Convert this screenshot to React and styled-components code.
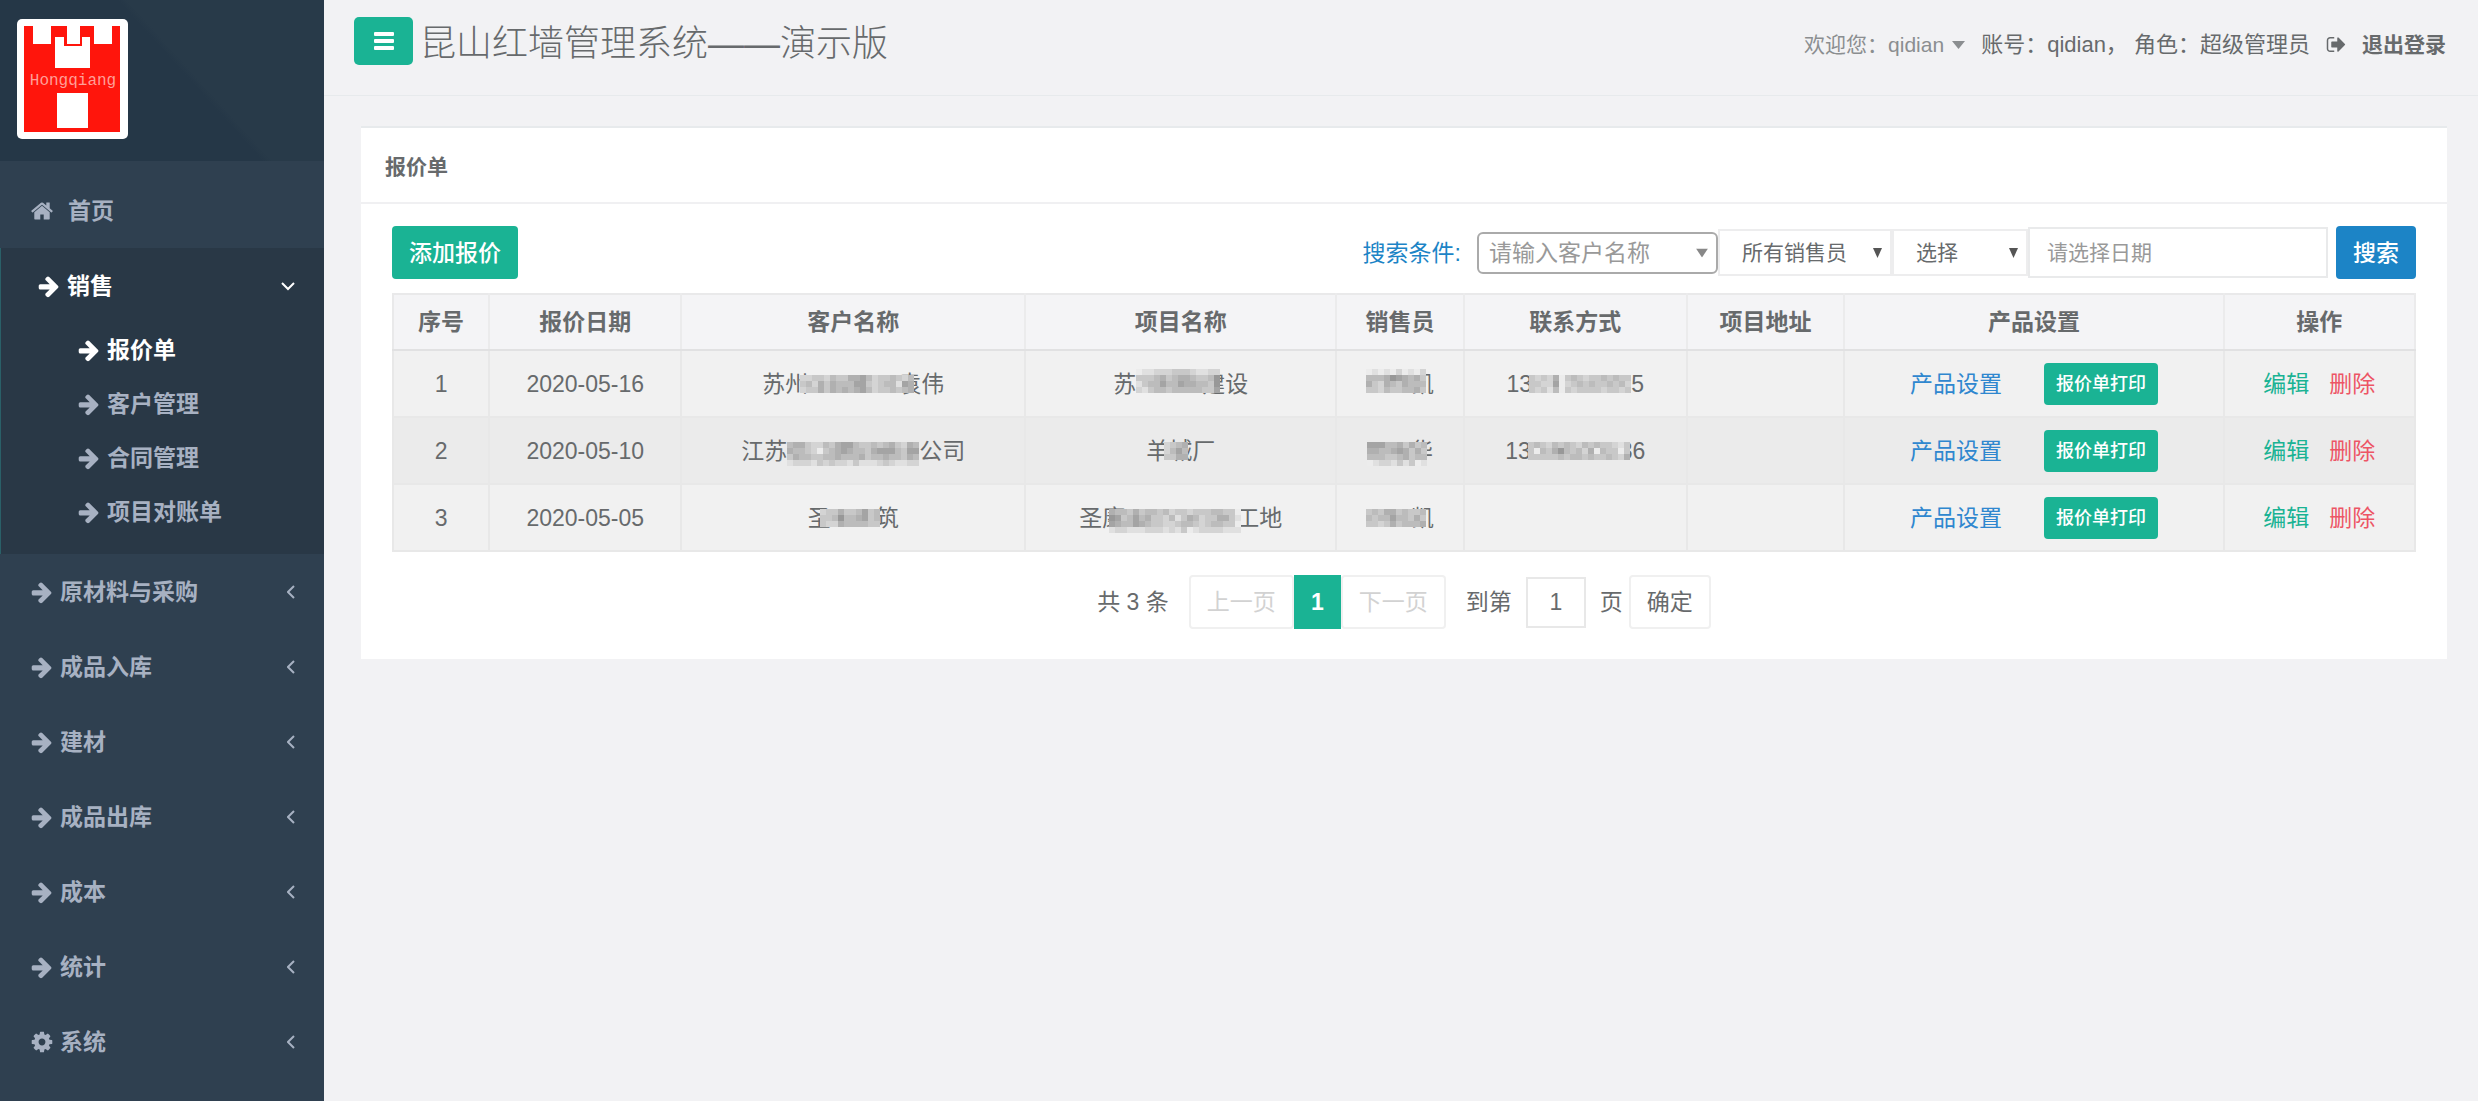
import React, { useState } from "react";
import styled, { createGlobalStyle, css } from "styled-components";

const GlobalStyle = createGlobalStyle`
  * {
    box-sizing: border-box;
  }

  body {
    margin: 0;
    background: #f2f2f4;
    color: #676a6c;
    font-family: "Liberation Sans", "Noto Sans CJK SC", sans-serif;
    font-size: 23px;
    line-height: 32px;
  }

  button,
  input,
  select {
    font-family: inherit;
    color: inherit;
    margin: 0;
  }

  a {
    text-decoration: none;
    color: inherit;
  }
`;

const Layout = styled.div`
  display: flex;
  min-height: 100vh;
`;

/* sidebar */

const Sidebar = styled.nav`
  flex: 0 0 324px;
  background: #2f4050;
  color: #a7b1c2;
  font-weight: 600;
`;

const Brand = styled.div`
  height: 161px;
  padding: 19px 17px;
  background: linear-gradient(
    48deg,
    #253747 0%,
    #253747 56%,
    #283a49 58%,
    #283a49 100%
  );
`;

const Menu = styled.ul`
  list-style: none;
  margin: 0;
  padding: 12px 0 0;
`;

const MenuGroup = styled.li`
  ${(props) =>
    props.$active &&
    css`
      background: #293846;
      color: #fff;
      border-left: 1px solid #2a6068;
      padding: 0 0 15px 6px;
    `}
`;

const MenuLink = styled.a`
  display: flex;
  align-items: center;
  height: 75px;
  padding: 0 29px 0 30px;
  gap: ${(props) => (props.$wide ? 14 : 6)}px;
`;

const MenuText = styled.span`
  flex: 1;
`;

const SubMenu = styled.ul`
  list-style: none;
  margin: 0;
  padding: 0;
`;

const SubLink = styled.a`
  display: flex;
  align-items: center;
  gap: 6px;
  height: 54px;
  padding-left: 70px;
  color: ${(props) => (props.$active ? "#fff" : "#a7b1c2")};
`;

const Icon = styled.svg`
  display: block;
  flex: none;
  fill: currentColor;
`;

const Chevron = styled.svg`
  flex: none;
  fill: none;
  stroke: currentColor;
  stroke-width: 2;
`;

/* header */

const Main = styled.main`
  flex: 1;
  min-width: 0;
`;

const TopBar = styled.header`
  display: flex;
  align-items: center;
  height: 96px;
  padding: 0 32px 14px 30px;
  border-bottom: 1px solid #e7eaec;
`;

const ToggleButton = styled.button`
  display: flex;
  align-items: center;
  justify-content: center;
  width: 59px;
  height: 48px;
  border: none;
  border-radius: 5px;
  background: #1ab394;
  color: #fff;
`;

const Title = styled.h1`
  flex: 1;
  margin: 0 0 0 7px;
  padding-top: 6px;
  font-size: 36px;
  font-weight: 300;
  line-height: 48px;
`;

const UserBar = styled.div`
  display: flex;
  align-items: center;
  padding-top: 8px;
  gap: 16px;
`;

const Account = styled.span`
  font-size: 22px;
`;

const Welcome = styled.a`
  display: flex;
  align-items: center;
  gap: 8px;
  font-size: 21px;
  color: #8b8e90;
`;

const Logout = styled.a`
  display: flex;
  align-items: center;
  gap: 15px;
  font-size: 21px;
  font-weight: 600;
`;

/* panel */

const Panel = styled.section`
  margin: 30px 31px 0 37px;
  background: #fff;
  border-top: 2px solid #e7eaec;
`;

const PanelTitle = styled.h2`
  margin: 0;
  padding: 23px 24px 19px;
  border-bottom: 2px solid #f0f0f2;
  font-size: 21px;
  font-weight: 600;
  line-height: 32px;
`;

const PanelBody = styled.div`
  padding: 22px 31px 30px;
`;

const Toolbar = styled.div`
  display: flex;
  justify-content: space-between;
  align-items: center;
  margin-bottom: 14px;
`;

const Button = styled.button`
  height: 53px;
  padding: 0 17px;
  border: none;
  border-radius: 4px;
  background: ${(props) => props.$color || "#1ab394"};
  color: #fff;
  font-size: 23px;
  font-weight: 500;
  line-height: 32px;
`;

const SearchForm = styled.form`
  display: flex;
  align-items: center;
`;

const SearchLabel = styled.label`
  color: #1c84c6;
  margin-right: 16px;
`;

const SelectBox = styled.span`
  position: relative;
  display: block;
  width: ${(props) => props.$width}px;
`;

const Select = styled.select`
  appearance: none;
  display: block;
  width: 100%;
  height: 47px;
  padding: 0 22px;
  border: 2px solid #ededee;
  border-radius: 0;
  background: #fff;
  font-size: 21px;
`;

const CustomerSelect = styled(Select)`
  height: 42px;
  padding: 0 10px;
  border: 2px solid #aaa;
  border-radius: 6px;
  font-size: 23px;
  color: #999;
`;

const Arrow = styled.svg`
  position: absolute;
  right: 10px;
  top: 50%;
  transform: translateY(-50%);
  fill: ${(props) => props.$color};
  pointer-events: none;
`;

const DateInput = styled.input`
  width: 300px;
  height: 51px;
  margin-right: 8px;
  padding: 0 17px;
  border: 2px solid #e9eaeb;
  background: #fff;
  font-size: 21px;

  &::placeholder {
    color: #999;
    opacity: 1;
  }
`;

/* table */

const Table = styled.table`
  width: 100%;
  table-layout: fixed;
  border-collapse: collapse;
  text-align: center;
  border: 2px solid #e9e9ea;
`;

const Th = styled.th`
  width: ${(props) => props.$width}px;
  height: 56px;
  padding: 0;
  background: #f4f4f6;
  border-right: 2px solid #ebebec;
  border-bottom: 2px solid #e1e1e2;
  font-weight: 600;
`;

const Row = styled.tr`
  background: #f1f1f1;

  &:nth-child(even) {
    background: #ebebeb;
  }
`;

const Td = styled.td`
  height: 67px;
  padding: 0;
  border: 2px solid #e8e8e8;
`;

const Actions = styled.div`
  display: flex;
  justify-content: center;
  align-items: center;
  gap: ${(props) => props.$gap}px;
`;

const ActionLink = styled.a`
  color: ${(props) => props.$color};
`;

const PrintButton = styled(Button)`
  height: 42px;
  padding: 0 12px;
  font-size: 18px;
`;

const MaskedText = styled.span`
  display: inline-flex;
  align-items: center;
  white-space: nowrap;
  vertical-align: middle;
`;

const MosaicSvg = styled.svg`
  position: relative;
  flex: none;
  overflow: visible;
  margin: 0 -${(props) => props.$right}px 0 -${(props) => props.$left}px;
`;

/* pagination */

const Pagination = styled.div`
  display: flex;
  justify-content: center;
  align-items: center;
  margin-top: 23px;
`;

const PageGroup = styled.div`
  display: flex;
  margin: 0 20px;
`;

const PageButton = styled.button`
  height: 54px;
  padding: 0 16px;
  border: 2px solid #f0f0f0;
  border-radius: 4px;
  background: #fff;
  font-size: 23px;
  line-height: 32px;

  &:disabled {
    color: #d2d2d2;
  }
`;

const CurrentPage = styled(PageButton)`
  width: 47px;
  padding: 0;
  border: none;
  border-radius: 0;
  background: #1ab394;
  color: #fff;
  font-weight: 600;
`;

const PageInput = styled.input`
  width: 60px;
  height: 51px;
  margin: 0 14px;
  padding: 0;
  border: 2px solid #e8e8e8;
  background: #fff;
  font-size: 23px;
  text-align: center;
`;

const PageUnit = styled.span`
  margin-right: 6px;
`;

const ICON_PATHS = {
  arrow:
    "M1600 960q0 54-37 91l-651 651q-39 37-91 37-51 0-90-37l-75-75q-38-38-38-91t38-91l293-293h-704q-52 0-84.5-37.5t-32.5-90.5v-128q0-53 32.5-90.5t84.5-37.5h704l-293-294q-38-36-38-90t38-90l75-75q38-38 90-38 53 0 91 38l651 651q37 35 37 90z",
  home: "M1472 992v480q0 26-19 45t-45 19h-384v-384h-256v384h-384q-26 0-45-19t-19-45v-480q0-1 .5-3t.5-3l575-474 575 474q1 2 1 6zm223-69l-62 74q-8 9-21 11h-3q-13 0-21-7l-692-577-692 577q-12 8-24 7-13-2-21-11l-62-74q-8-10-7-23.5t11-21.5l719-599q32-26 76-26t76 26l244 204v-195q0-14 9-23t23-9h192q14 0 23 9t9 23v408l219 182q10 8 11 21.5t-7 23.5z",
  cog: "M1152 896q0-106-75-181t-181-75-181 75-75 181 75 181 181 75 181-75 75-181zm512-109v222q0 12-8 23t-20 13l-185 28q-19 54-39 91 35 50 107 138 10 12 10 25t-9 23q-27 37-99 108t-94 71q-12 0-26-9l-138-108q-44 23-91 38-16 136-29 186-7 28-36 28h-222q-14 0-24.5-8.5t-11.5-21.5l-28-184q-49-16-90-37l-141 107q-10 9-25 9-14 0-25-11-126-114-165-168-7-10-7-23 0-12 8-23 15-21 51-66.5t54-70.5q-27-50-41-99l-183-27q-13-2-21-12.5t-8-23.5v-222q0-12 8-23t19-13l186-28q14-46 39-92-40-57-107-138-10-12-10-24 0-10 9-23 26-36 98.5-107.5t94.5-71.5q13 0 26 10l138 107q44-23 91-38 16-136 29-186 7-28 36-28h222q14 0 24.5 8.5t11.5 21.5l28 184q49 16 90 37l142-107q9-9 24-9 13 0 25 10 129 119 165 170 7 8 7 22 0 12-8 23-15 21-51 66.5t-54 70.5q26 50 41 98l183 28q13 2 21 12.5t8 23.5z",
  signOut:
    "M704 1440q0 4 1 20t.5 26.5-3 23.5-10 19.5-20.5 6.5h-320q-119 0-203.5-84.5t-84.5-203.5v-704q0-119 84.5-203.5t203.5-84.5h320q13 0 22.5 9.5t9.5 22.5q0 4 1 20t.5 26.5-3 23.5-10 19.5-20.5 6.5h-320q-66 0-113 47t-47 113v704q0 66 47 113t113 47h312l11.5 1 11.5 3 8 5.5 7 9 2 13.5zm928-544q0 26-19 45l-544 544q-19 19-45 19t-45-19-19-45v-288h-448q-26 0-45-19t-19-45v-384q0-26 19-45t45-19h448v-288q0-26 19-45t45-19 45 19l544 544q19 19 19 45z",
};

const Glyph = ({ name, size = 24 }) => (
  <Icon width={size} height={size} viewBox="0 0 1792 1792" aria-hidden="true">
    <path d={ICON_PATHS[name]} />
  </Icon>
);

const Logo = () => (
  <svg width="111" height="120" viewBox="0 0 111 120" role="img">
    <rect width="111" height="120" rx="5" fill="#fff" />
    <path
      d="M7 7h9v18h18V7h16v18h13V7h14v18h18V7h8v106H7z"
      fill="#ff150c"
    />
    <path d="M38 18h9v9h18v-9h8v31H38z" fill="#fff" />
    <rect x="40" y="74" width="31" height="35" fill="#fff" />
    <text
      x="56"
      y="66"
      textAnchor="middle"
      fontFamily="'Liberation Mono', monospace"
      fontSize="16"
      fontWeight="400"
      fill="#ff9f98"
    >
      Hongqiang
    </text>
  </svg>
);

const menu = [
  "原材料与采购",
  "成品入库",
  "建材",
  "成品出库",
  "成本",
  "统计",
  "系统",
];

const subMenu = ["报价单", "客户管理", "合同管理", "项目对账单"];

const columns = [
  ["序号", 96],
  ["报价日期", 192],
  ["客户名称", 343],
  ["项目名称", 311],
  ["销售员", 127],
  ["联系方式", 223],
  ["项目地址", 157],
  ["产品设置", 379],
  ["操作", 191],
];

// each mask row is a line of grey levels, 0 is the lightest
const rows = [
  {
    date: "2020-05-16",
    customer: {
      before: "苏州",
      after: "袁伟",
      left: 8,
      right: 16,
      mask: ["2233243355642334324", "3425354446632344165", "2335354545642334345"],
    },
    project: {
      before: "苏",
      after: "建设",
      left: 0,
      right: 18,
      lift: 1,
      mask: ["01122233321122", "33345345543347", "13446446554437", "21344344444336"],
    },
    seller: {
      before: "",
      after: "凯",
      left: 0,
      right: 15,
      lift: 1,
      mask: ["0101020102", "4445765453", "5325435444", "3324334453"],
    },
    phone: {
      before: "13",
      after: "5",
      left: 3,
      right: 0,
      mask: ["32325034323343433", "33226023434334342", "32314032333323323"],
    },
  },
  {
    date: "2020-05-10",
    customer: {
      before: "江苏",
      after: "公司",
      left: 0,
      right: 0,
      mask: [
        "4553224356643343453254",
        "5443203456544356664366",
        "3544334454445344544354",
        "1222132322131112321122",
      ],
    },
    project: {
      before: "羊",
      after: "城厂",
      left: 5,
      right: 19,
      mask: ["2345", "2464", "3355"],
    },
    seller: {
      before: "",
      after: "华",
      left: 0,
      right: 17,
      mask: ["6664453534", "5544565353", "4443345344", "0122131301"],
    },
    phone: {
      before: "13",
      after: "36",
      left: 3,
      right: 10,
      mask: ["34324343243433213", "30435743425043303", "33333434434334325"],
    },
  },
  {
    date: "2020-05-05",
    customer: {
      before: "圣",
      after: "筑",
      left: 11,
      right: 4,
      mask: ["2335334634", "3347445634", "3225444433"],
    },
    project: {
      before: "圣康",
      after: "工地",
      left: 16,
      right: 5,
      mask: [
        "5443534434233233344330",
        "7634645332413542335531",
        "6544654332234432344330",
        "1221112221213012222111",
      ],
    },
    seller: {
      before: "",
      after: "凯",
      left: 0,
      right: 15,
      mask: ["3435534334", "4344644353", "3323534445"],
    },
    phone: null,
  },
];

const CELL = 6;

const shade = (level) => {
  const grey = 236 - Number(level) * 12;
  return `rgb(${grey}, ${grey}, ${grey})`;
};

const Masked = ({ value }) => {
  if (!value) return null;
  const { before, after, left, right, mask, lift = 0 } = value;
  return (
    <MaskedText>
      {before}
      <MosaicSvg
        width={mask[0].length * CELL}
        height={CELL * 3}
        $left={left}
        $right={right}
        shapeRendering="crispEdges"
        aria-hidden="true"
      >
        {mask.map((line, y) =>
          line
            .split("")
            .map((level, x) => (
              <rect
                key={`${x}-${y}`}
                x={x * CELL}
                y={(y - lift) * CELL}
                width={CELL}
                height={CELL}
                fill={shade(level)}
              />
            ))
        )}
      </MosaicSvg>
      {after}
    </MaskedText>
  );
};

const SelectArrow = () => (
  <Arrow $color="#555" width="9" height="10" viewBox="0 0 9 10">
    <path d="M0 0h9L4.500 10z" />
  </Arrow>
);

const App = () => {
  const [page, setPage] = useState("1");

  return (
    <>
      <GlobalStyle />
      <Layout>
        <Sidebar>
          <Brand>
            <Logo />
          </Brand>
          <Menu>
            <li>
              <MenuLink href="#" $wide>
                <Glyph name="home" />
                <MenuText>首页</MenuText>
              </MenuLink>
            </li>
            <MenuGroup $active>
              <MenuLink href="#">
                <Glyph name="arrow" />
                <MenuText>销售</MenuText>
                <Chevron width="14" height="10" viewBox="0 0 14 10">
                  <path d="M1 2l6 6 6-6" />
                </Chevron>
              </MenuLink>
              <SubMenu>
                {subMenu.map((item, index) => (
                  <li key={item}>
                    <SubLink href="#" $active={index === 0}>
                      <Glyph name="arrow" />
                      {item}
                    </SubLink>
                  </li>
                ))}
              </SubMenu>
            </MenuGroup>
            {menu.map((item) => (
              <MenuGroup key={item}>
                <MenuLink href="#">
                  <Glyph name={item === "系统" ? "cog" : "arrow"} />
                  <MenuText>{item}</MenuText>
                  <Chevron width="8" height="14" viewBox="0 0 8 14">
                    <path d="M7 1L1 7l6 6" />
                  </Chevron>
                </MenuLink>
              </MenuGroup>
            ))}
          </Menu>
        </Sidebar>

        <Main>
          <TopBar>
            <ToggleButton type="button" aria-label="菜单">
              <Icon width="20" height="18" viewBox="0 0 20 18">
                <rect width="20" height="4" rx="1" />
                <rect y="7" width="20" height="4" rx="1" />
                <rect y="14" width="20" height="4" rx="1" />
              </Icon>
            </ToggleButton>
            <Title>昆山红墙管理系统——演示版</Title>
            <UserBar>
              <Welcome href="#">
                欢迎您：qidian
                <Icon width="13" height="8" viewBox="0 0 13 8">
                  <path d="M0 0h13L6.500 8z" />
                </Icon>
              </Welcome>
              <Account>账号：qidian， 角色：超级管理员</Account>
              <Logout href="#">
                <Glyph name="signOut" size={21} />
                退出登录
              </Logout>
            </UserBar>
          </TopBar>

          <Panel>
            <PanelTitle>报价单</PanelTitle>
            <PanelBody>
              <Toolbar>
                <Button type="button">添加报价</Button>
                <SearchForm onSubmit={(event) => event.preventDefault()}>
                  <SearchLabel htmlFor="customer">搜索条件:</SearchLabel>
                  <SelectBox $width={241}>
                    <CustomerSelect id="customer">
                      <option>请输入客户名称</option>
                    </CustomerSelect>
                    <Arrow
                      $color="#888"
                      width="12"
                      height="9"
                      viewBox="0 0 12 9"
                    >
                      <path d="M0 0h12L6 9z" />
                    </Arrow>
                  </SelectBox>
                  <SelectBox $width={174}>
                    <Select aria-label="销售员">
                      <option>所有销售员</option>
                    </Select>
                    <SelectArrow />
                  </SelectBox>
                  <SelectBox $width={136}>
                    <Select aria-label="选择">
                      <option>选择</option>
                    </Select>
                    <SelectArrow />
                  </SelectBox>
                  <DateInput
                    type="text"
                    placeholder="请选择日期"
                    aria-label="日期"
                  />
                  <Button type="submit" $color="#1c84c6">
                    搜索
                  </Button>
                </SearchForm>
              </Toolbar>

              <Table>
                <thead>
                  <tr>
                    {columns.map(([label, width]) => (
                      <Th key={label} $width={width}>
                        {label}
                      </Th>
                    ))}
                  </tr>
                </thead>
                <tbody>
                  {rows.map((row, index) => (
                    <Row key={row.date}>
                      <Td>{index + 1}</Td>
                      <Td>{row.date}</Td>
                      <Td>
                        <Masked value={row.customer} />
                      </Td>
                      <Td>
                        <Masked value={row.project} />
                      </Td>
                      <Td>
                        <Masked value={row.seller} />
                      </Td>
                      <Td>
                        <Masked value={row.phone} />
                      </Td>
                      <Td />
                      <Td>
                        <Actions $gap={42}>
                          <ActionLink href="#" $color="#2f87cf">
                            产品设置
                          </ActionLink>
                          <PrintButton type="button">报价单打印</PrintButton>
                        </Actions>
                      </Td>
                      <Td>
                        <Actions $gap={20}>
                          <ActionLink href="#" $color="#1ab394">
                            编辑
                          </ActionLink>
                          <ActionLink href="#" $color="#ed5565">
                            删除
                          </ActionLink>
                        </Actions>
                      </Td>
                    </Row>
                  ))}
                </tbody>
              </Table>

              <Pagination>
                <span>共 3 条</span>
                <PageGroup>
                  <PageButton type="button" disabled>
                    上一页
                  </PageButton>
                  <CurrentPage type="button">1</CurrentPage>
                  <PageButton type="button" disabled>
                    下一页
                  </PageButton>
                </PageGroup>
                <label htmlFor="page">到第</label>
                <PageInput
                  id="page"
                  value={page}
                  onChange={(event) => setPage(event.target.value)}
                />
                <PageUnit>页</PageUnit>
                <PageButton type="button">确定</PageButton>
              </Pagination>
            </PanelBody>
          </Panel>
        </Main>
      </Layout>
    </>
  );
};

export default App;
